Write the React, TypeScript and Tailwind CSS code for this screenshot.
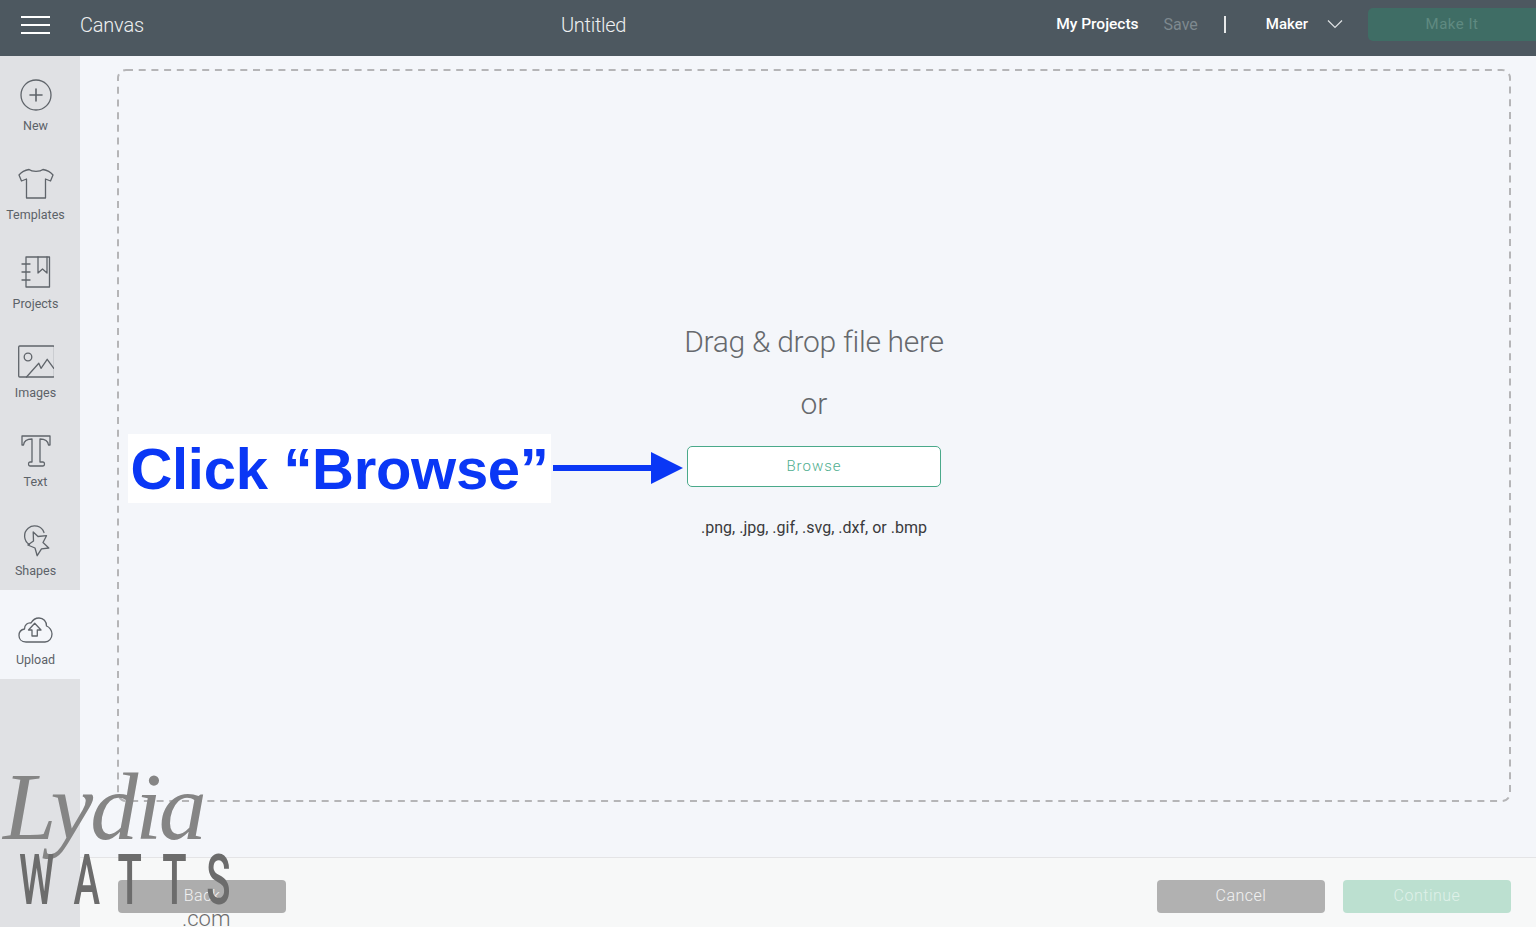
import type { ReactNode } from "react";

const stroke = {
  fill: "none",
  stroke: "#5f646a",
  strokeWidth: 1.3,
  strokeLinejoin: "round" as const,
  strokeLinecap: "round" as const,
};

function Icon({ children }: { children: ReactNode }) {
  return (
    <svg width="36" height="36" viewBox="0 0 36 36" {...stroke}>
      {children}
    </svg>
  );
}

const navItems: { label: string; active?: boolean; icon: ReactNode }[] = [
  {
    label: "New",
    icon: (
      <Icon>
        <circle cx="18" cy="18" r="15" />
        <path d="M18 12v12M12 18h12" strokeWidth="1.6" />
      </Icon>
    ),
  },
  {
    label: "Templates",
    icon: (
      <Icon>
        <path d="M11 3.500C14 6 22 6 25 3.500c4 .7 7.500 2.500 10 5.500l-2.500 6-5-2V32H8.500V13l-5 2L1 9c2.500-3 6-4.800 10-5.500Z" />
      </Icon>
    ),
  },
  {
    label: "Projects",
    icon: (
      <Icon>
        <path d="M8 2h23.500v30H8V2Z" />
        <path d="M20 2v16l4.500-4 4.500 4V2M4 9h8M4 17h8M4 25h8" />
      </Icon>
    ),
  },
  {
    label: "Images",
    icon: (
      <Icon>
        <rect x="0.700" y="2" width="35.800" height="31" rx="1" />
        <circle cx="10" cy="13" r="3.800" />
        <path d="M8.500 33 20.800 19.300l2.200 5 6.200-9 6.600 9" />
      </Icon>
    ),
  },
  {
    label: "Text",
    icon: (
      <Icon>
        <path d="M4 3h28v9h-1.500c-.5-4-3.500-6-8.500-6v23h3c1 0 1.500.8 1.500 2s-.5 2-1.500 2H12c-1 0-1.500-.8-1.500-2s.5-2 1.500-2h2V6c-5 0-8 2-8.500 6H4V3Z" />
      </Icon>
    ),
  },
  {
    label: "Shapes",
    icon: (
      <Icon>
        <path d="M11.500 22.500A10 10 0 1 1 26 10.500" />
        <path d="M15.200 10 20 14.500l8.500-.8-3.500 6.800 5.800 5.500-7.300.8-4.300 6.900-2.200-7.700-7.200-3 5.700-4L15.200 10Z" />
      </Icon>
    ),
  },
  {
    label: "Upload",
    active: true,
    icon: (
      <Icon>
        <path d="M8 31c-5 0-7-3.500-7-6.500C1 21 3.500 18.500 6.500 18c0-4 3-6.500 6.500-6 2-3.500 5-5 8-5 4.500 0 7.500 3.500 7.500 8 3 1 5.500 4.500 5.500 8 0 4.500-3 8-7 8H8Z" />
        <path d="M16.700 12.300 23 19h-3.700v6H14v-6h-3.500l6.200-6.700Z" />
      </Icon>
    ),
  },
];

export default function App() {
  return (
    <div className="relative flex h-[927px] flex-col overflow-hidden font-['Roboto',sans-serif]">
      <header className="flex h-14 shrink-0 items-center bg-[#4d5860] pb-2 text-white">
        <div className="flex w-[561px] shrink-0 items-center pl-[21px]">
          <div className="mt-px flex w-[29px] flex-col gap-[6px]">
            <span className="h-0.5 bg-white" />
            <span className="h-0.5 bg-white" />
            <span className="h-0.5 bg-white" />
          </div>
          <span className="mt-0.5 ml-[30px] text-[20px] font-light tracking-[-0.2px] text-[#eef0f1]">Canvas</span>
        </div>
        <span className="mt-0.5 text-[20px] font-light tracking-[-0.3px] text-[#eef0f1]">Untitled</span>
        <div className="ml-auto flex items-center">
          <span className="mt-px text-[15.5px] font-medium">My Projects</span>
          <span className="mt-px ml-[25px] text-[16px] text-[#7e898f]">Save</span>
          <span className="ml-[26px] h-[17px] w-0.5 bg-[#e6e8e9]" />
          <span className="ml-[40px] text-[15px] font-medium">Maker</span>
          <svg className="ml-[19px]" width="16" height="10" viewBox="0 0 16 10" fill="none" stroke="#dfe2e4" strokeWidth="1.2">
            <path d="M1 1.500 8 8.500l7-7" />
          </svg>
          <button className="ml-[25px] h-[33px] w-[168px] rounded-l-[5px] bg-[#3f6d65] text-[15px] tracking-[0.5px] text-[#5f8a81]">
            Make It
          </button>
        </div>
      </header>

      <div className="flex min-h-0 flex-1">
        <nav className="flex w-20 shrink-0 flex-col bg-[#e0e1e4]">
          {navItems.map((item) => (
            <div
              key={item.label}
              className={`flex h-[89px] flex-col items-center pt-[21px] pr-[9px] ${item.active ? "bg-[#f4f6fa]" : ""}`}
            >
              {item.icon}
              <span className="mt-[5px] text-[12.5px] leading-4 whitespace-nowrap text-[#5c6268]">{item.label}</span>
            </div>
          ))}
        </nav>

        <div className="flex min-w-0 flex-1 flex-col">
          <main className="flex-1 bg-[#f4f6fa] pt-[13px] pr-[25px] pb-[55px] pl-[37px]">
            <div className="relative flex h-full flex-col items-center pt-[253px]">
              {/* dash pattern of the drop zone is longer than a css dashed border gives */}
              <svg className="pointer-events-none absolute inset-0" width="1394" height="733" fill="none">
                <rect x="1" y="1" width="1392" height="731" rx="8" stroke="#b5b5b7" strokeWidth="2" strokeDasharray="7 5.700" />
              </svg>
              <p className="text-[30px] leading-10 font-light tracking-[-0.3px] text-[#66696d]">Drag &amp; drop file here</p>
              <p className="mt-[22px] text-[30px] leading-10 font-light text-[#66696d]">or</p>
              <button className="mt-[22px] h-[41px] w-[254px] rounded-[5px] border border-[#4aa98a] bg-white text-[15px] font-light tracking-[1px] text-[#4fae8f]">
                Browse
              </button>
              <p className="mt-[31px] text-[16px] leading-5 text-[#3a3a3c]">.png, .jpg, .gif, .svg, .dxf, or .bmp</p>

              <div className="absolute top-[365px] left-[11px] flex items-center">
                <span className="flex h-[69px] w-[423px] items-center justify-center bg-white font-['Liberation_Sans',sans-serif] text-[58px] leading-none font-bold tracking-[-0.3px] whitespace-nowrap text-[#0a37f5]">
                  Click “Browse”
                </span>
                <svg className="mt-[-1px] ml-[2px]" width="130" height="32" viewBox="0 0 130 32" fill="#0a37f5">
                  <path d="M0 13h98V0l32 16-32 16V19H0v-6Z" />
                </svg>
              </div>
            </div>
          </main>
          <footer className="flex h-[70px] shrink-0 items-center justify-between border-t border-[#e4e4e6] bg-[#f7f8f8] pt-[7px] pr-[25px] pl-[38px] text-[16px] font-light tracking-[0.5px]">
            <button className="h-[33px] w-[168px] rounded-[4px] bg-[#adadad] text-[#f1f1f1]">Back</button>
            <div className="flex gap-[18px]">
              <button className="h-[33px] w-[168px] rounded-[4px] bg-[#b1b1b1] text-[#f1f1f1]">Cancel</button>
              <button className="h-[33px] w-[168px] rounded-[4px] bg-[#bce0d0] text-[#dff1e9]">Continue</button>
            </div>
          </footer>
        </div>
      </div>

      {/* watermark sits over everything */}
      <div className="pointer-events-none absolute top-[760px] left-0 h-[167px] w-[240px] text-[#6c6c6c]">
        <span className="absolute top-[-8px] left-[3px] font-['Liberation_Serif',serif] text-[96px] leading-[110px] font-normal tracking-[-3px] text-[#858585] italic">
          Lydia
        </span>
        <span className="absolute top-[86px] left-[19px] origin-top scale-y-[1.75] text-[40px] leading-[40px] font-medium tracking-[20px] whitespace-nowrap">
          WATTS
        </span>
        <span className="absolute top-[147px] left-[182px] text-[22px] leading-[24px] font-light">.com</span>
      </div>
    </div>
  );
}
